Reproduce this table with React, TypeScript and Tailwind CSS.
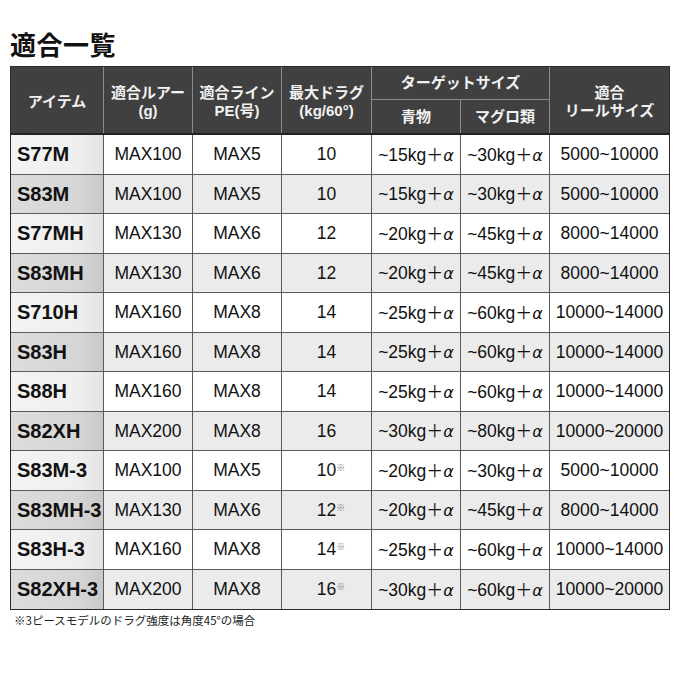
import React from "react";

const rows: [string, string, string, string, boolean, string, string, string][] = [
  ["S77M", "MAX100", "MAX5", "10", false, "~15kg+α", "~30kg+α", "5000~10000"],
  ["S83M", "MAX100", "MAX5", "10", false, "~15kg+α", "~30kg+α", "5000~10000"],
  ["S77MH", "MAX130", "MAX6", "12", false, "~20kg+α", "~45kg+α", "8000~14000"],
  ["S83MH", "MAX130", "MAX6", "12", false, "~20kg+α", "~45kg+α", "8000~14000"],
  ["S710H", "MAX160", "MAX8", "14", false, "~25kg+α", "~60kg+α", "10000~14000"],
  ["S83H", "MAX160", "MAX8", "14", false, "~25kg+α", "~60kg+α", "10000~14000"],
  ["S88H", "MAX160", "MAX8", "14", false, "~25kg+α", "~60kg+α", "10000~14000"],
  ["S82XH", "MAX200", "MAX8", "16", false, "~30kg+α", "~80kg+α", "10000~20000"],
  ["S83M-3", "MAX100", "MAX5", "10", true, "~20kg+α", "~30kg+α", "5000~10000"],
  ["S83MH-3", "MAX130", "MAX6", "12", true, "~20kg+α", "~45kg+α", "8000~14000"],
  ["S83H-3", "MAX160", "MAX8", "14", true, "~25kg+α", "~60kg+α", "10000~14000"],
  ["S82XH-3", "MAX200", "MAX8", "16", true, "~30kg+α", "~60kg+α", "10000~20000"],
];

const jp = { fontFamily: '"Noto Sans CJK JP", "Noto Sans", sans-serif' };
const lat = { fontFamily: '"Liberation Sans", Arial, "Noto Sans CJK JP", sans-serif' };

function Alpha({ t }: { t: string }) {
  const parts = t.split("+");
  return (
    <span className="whitespace-nowrap inline-flex items-baseline">
      {parts[0]}
      <span style={jp} className="text-[17px]">＋</span>
      <span style={{ fontFamily: '"DejaVu Sans", sans-serif' }} className="italic text-[16px]">α</span>
    </span>
  );
}

export default function App() {
  const hc =
    "bg-[#404040] text-[#f2f2f2] font-bold text-[15px] leading-[18px] flex flex-col items-center justify-center text-center border-r border-[#8a8a8a]";
  return (
    <div className="w-[680px] h-[680px] bg-white relative">
      <div className="pt-[27px] pl-[10px]">
        <h1 style={jp} className="text-[26px] font-bold leading-[34px] text-[#111] tracking-[0.5px]">
          適合一覧
        </h1>
      </div>
      <div className="ml-[10px] mt-[5px] w-[660px] border border-[#2a2a2a]">
        <div
          className="grid grid-cols-[93px_89px_89px_90px_89px_89px_119px] grid-rows-[33px_33px] border-b-2 border-[#222]"
          style={lat}
        >
          <div className={hc + " row-span-2 bg-[#343434] pt-[4px]"}>アイテム</div>
          <div className={hc + " row-span-2 pt-[4px]"}>
            <span>適合ルアー</span>
            <span>(g)</span>
          </div>
          <div className={hc + " row-span-2 pt-[4px]"}>
            <span>適合ライン</span>
            <span>PE(号)</span>
          </div>
          <div className={hc + " row-span-2 pt-[4px]"}>
            <span>最大ドラグ</span>
            <span>(kg/60°)</span>
          </div>
          <div className={hc + " col-span-2 border-b border-b-[#8a8a8a]"}>ターゲットサイズ</div>
          <div className={hc + " row-span-2 border-r-0 pt-[4px]"}>
            <span>適合</span>
            <span>リールサイズ</span>
          </div>
          <div className={hc}>青物</div>
          <div className={hc}>マグロ類</div>
        </div>
        {rows.map((r, i) => {
          const even = i % 2 === 1;
          const cell =
            "flex items-center justify-center text-[17.5px] text-[#111] border-r border-[#5a5a5a] " +
            (even ? "bg-[#ebebeb]" : "bg-white");
          return (
            <div
              key={i}
              className={
                "grid grid-cols-[93px_89px_89px_90px_89px_89px_119px] h-[39.5px] " +
                (i < rows.length - 1 ? "border-b border-[#5a5a5a]" : "")
              }
              style={lat}
            >
              <div
                className={
                  "flex items-center pl-[6px] font-bold text-[20px] text-[#111] border-r border-[#5a5a5a] " +
                  (even
                    ? "bg-[linear-gradient(to_right,#dcdcdc_0%,#d6d6d6_70%,#c9c9c9_100%)]"
                    : "bg-[linear-gradient(to_right,#f3f3f3_0%,#efefef_70%,#e4e4e4_100%)]")
                }
              >
                {r[0]}
              </div>
              <div className={cell}>{r[1]}</div>
              <div className={cell}>{r[2]}</div>
              <div className={cell}>
                <span className="relative">
                  {r[3]}
                  {r[4] && (
                    <span
                      style={jp}
                      className="absolute left-full top-[6px] text-[9px] text-[#777] leading-none"
                    >
                      ※
                    </span>
                  )}
                </span>
              </div>
              <div className={cell}>
                <Alpha t={r[5]} />
              </div>
              <div className={cell}>
                <Alpha t={r[6]} />
              </div>
              <div className={cell + " border-r-0"}>{r[7]}</div>
            </div>
          );
        })}
      </div>
      <div style={jp} className="ml-[14px] mt-[2px] text-[11.5px] leading-[16px] text-[#222]">
        ※3ピースモデルのドラグ強度は角度45°の場合
      </div>
    </div>
  );
}
